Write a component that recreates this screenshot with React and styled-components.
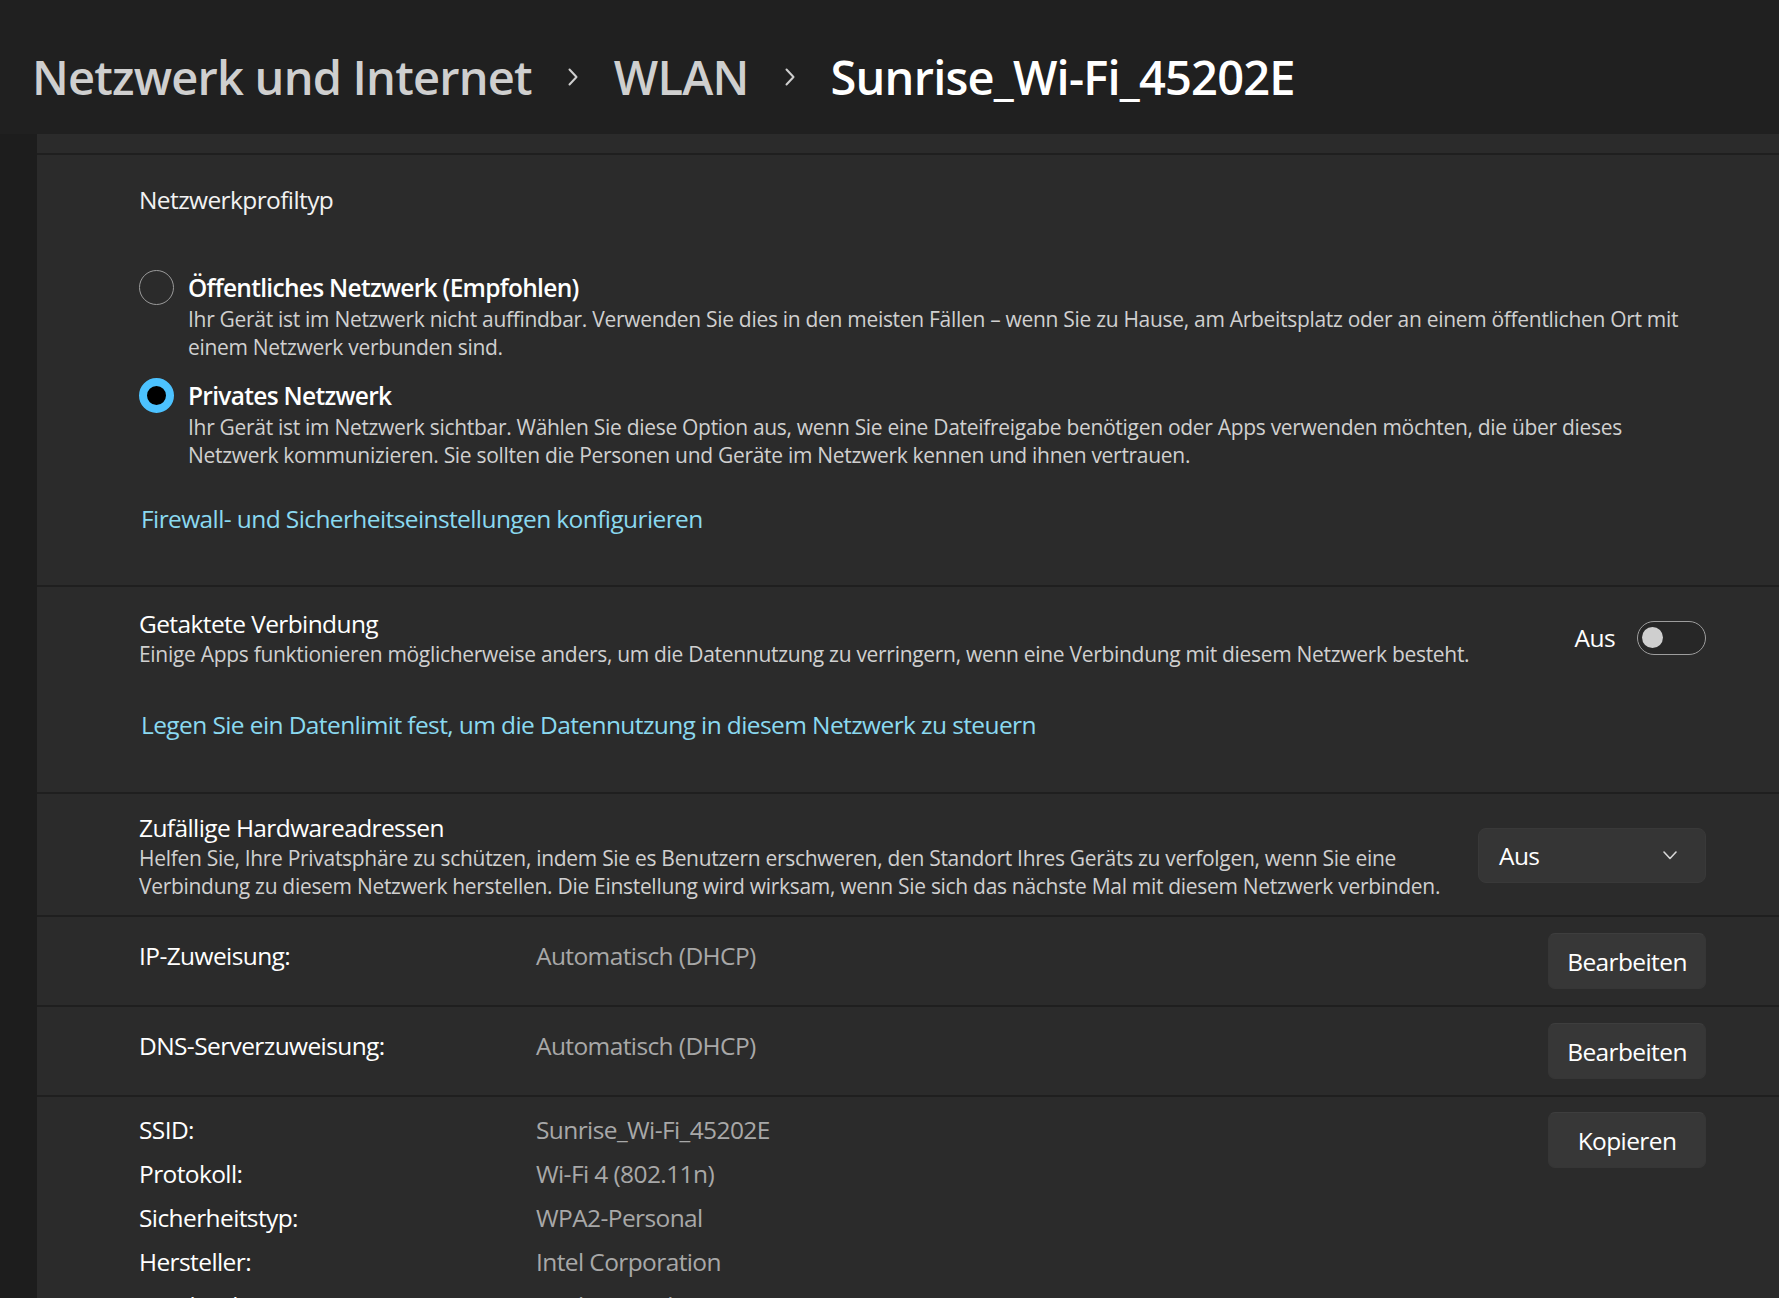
import styled, { createGlobalStyle } from "styled-components";

const FONT = `"Segoe UI", "Open Sans", "Noto Sans", sans-serif`;

const GlobalStyle = createGlobalStyle`
  html, body {
    margin: 0;
    padding: 0;
  }
  body {
    background: #202020;
    font-family: ${FONT};
    color: #ffffff;
    overflow: hidden;
  }
`;

const Page = styled.div`
  width: 1779px;
  height: 1298px;
  display: flex;
  flex-direction: column;
  overflow: hidden;
`;

const Header = styled.header`
  height: 134px;
  flex-shrink: 0;
  box-sizing: border-box;
  padding: 20px 0 0 32px;
  display: flex;
  align-items: center;
  gap: 36px;
`;

const Crumb = styled.span`
  font-size: 47px;
  line-height: 1;
  font-weight: 600;
  letter-spacing: -0.8px;
  white-space: nowrap;
  color: ${(p) => (p.$current ? "#ffffff" : "#cfcfcf")};
`;

const Body = styled.div`
  flex: 1;
  display: flex;
  padding-left: 37px;
  background: #1d1d1d;
  min-height: 0;
  overflow: hidden;
`;

const Panel = styled.main`
  flex: 1;
  min-width: 0;
  min-height: 0;
  display: flex;
  flex-direction: column;
  gap: 2px;
  background: #1f1f1f;
`;

const Card = styled.section`
  background: #2b2b2b;
  flex-shrink: 0;
  padding: ${(p) => p.$pad || "0 73px 0 102px"};
  font-size: 24.5px;
  letter-spacing: -0.6px;
`;

const StubCard = styled(Card)`
  height: 19px;
  padding: 0;
`;

const SectionLabel = styled.div`
  line-height: 35px;
  color: #f2f2f2;
`;

const RadioGroup = styled.div`
  margin-top: 53px;
  display: flex;
  flex-direction: column;
  gap: 17px;
`;

const RadioOption = styled.label`
  display: grid;
  grid-template-columns: 35px 1fr;
  column-gap: 14px;
`;

const RadioDot = styled.span`
  width: 35px;
  height: 35px;
  box-sizing: border-box;
  border-radius: 50%;
  background: ${(p) => (p.$checked ? "#000000" : "transparent")};
  border: ${(p) => (p.$checked ? "8.5px solid #4cc2ff" : "1.5px solid #9a9a9a")};
`;

const OptionTitle = styled.div`
  line-height: 35px;
  font-weight: 600;
  letter-spacing: -0.7px;
`;

const Desc = styled.div`
  grid-column: 2;
  font-size: 21px;
  line-height: 28px;
  letter-spacing: -0.3px;
  color: #d0d0d0;
  white-space: nowrap;
`;

const Link = styled.a`
  display: block;
  width: max-content;
  margin-top: ${(p) => p.$top || "32px"};
  margin-left: 2px;
  line-height: 35px;
  color: #8ad9f0;
  text-decoration: none;
  cursor: pointer;
`;

const SettingRow = styled.div`
  display: flex;
  align-items: center;
  justify-content: space-between;
  gap: 40px;
`;

const TextBlock = styled.div`
  display: flex;
  flex-direction: column;
  min-width: 0;
`;

const SettingTitle = styled.div`
  line-height: 33px;
`;

const SettingDesc = styled(Desc)`
  grid-column: auto;
`;

const ToggleWrap = styled.div`
  display: flex;
  align-items: center;
  gap: 22px;
  flex-shrink: 0;
`;

const Toggle = styled.button`
  width: 69px;
  height: 34px;
  box-sizing: border-box;
  border-radius: 17px;
  border: 1.5px solid #9d9d9d;
  background: #272727;
  padding: 0 0 0 4px;
  display: flex;
  align-items: center;
`;

const Knob = styled.span`
  width: 21px;
  height: 21px;
  border-radius: 50%;
  background: #cfcfcf;
`;

const Dropdown = styled.button`
  width: 228px;
  height: 55px;
  flex-shrink: 0;
  box-sizing: border-box;
  border-radius: 8px;
  border: 1px solid #393939;
  background: #353535;
  color: #ffffff;
  font-family: ${FONT};
  font-size: 24.5px;
  letter-spacing: -0.6px;
  padding: 0 28px 0 20px;
  display: flex;
  align-items: center;
  justify-content: space-between;
`;

const InfoCard = styled(Card)`
  height: 88px;
  box-sizing: border-box;
  display: flex;
  align-items: center;
`;

const InfoLabel = styled.span`
  width: 397px;
  flex-shrink: 0;
  margin-bottom: 12px;
`;

const InfoValue = styled.span`
  flex: 1;
  color: #a8a8a8;
  margin-bottom: 12px;
`;

const Button = styled.button`
  width: 158px;
  height: 56px;
  flex-shrink: 0;
  box-sizing: border-box;
  border-radius: 7px;
  border: 1px solid #363636;
  border-top-color: #3e3e3e;
  background: #373737;
  color: #ffffff;
  font-family: ${FONT};
  font-size: 24.5px;
  letter-spacing: -0.6px;
  margin-top: ${(p) => p.$top || "0"};
`;

const PropsCard = styled(Card)`
  display: flex;
  align-items: flex-start;
  flex: 1;
`;

const PropGrid = styled.dl`
  flex: 1;
  margin: 0;
  display: grid;
  grid-template-columns: 397px auto;
  line-height: 44px;
`;

const PropKey = styled.dt`
  margin: 0;
`;

const PropValue = styled.dd`
  margin: 0;
  color: #a8a8a8;
`;

const Chevron = () => (
  <svg width="10" height="18" viewBox="0 0 10 18" fill="none">
    <path d="M1.5 1.5 L8.5 9 L1.5 16.5" stroke="#cfcfcf" strokeWidth="2" strokeLinecap="round" strokeLinejoin="round" />
  </svg>
);

const ChevronDown = () => (
  <svg width="14" height="9" viewBox="0 0 14 9" fill="none">
    <path d="M1 1 L7 7.5 L13 1" stroke="#d6d6d6" strokeWidth="1.6" strokeLinecap="round" strokeLinejoin="round" />
  </svg>
);

const properties = [
  ["SSID:", "Sunrise_Wi-Fi_45202E"],
  ["Protokoll:", "Wi-Fi 4 (802.11n)"],
  ["Sicherheitstyp:", "WPA2-Personal"],
  ["Hersteller:", "Intel Corporation"],
  ["Beschreibung:", "Intel(R) Wireless-AC 9560 160MHz"],
  ["Treiberversion:", "22.150.0.3"],
];

export default function App() {
  return (
    <Page>
      <GlobalStyle />
      <Header>
        <Crumb>Netzwerk und Internet</Crumb>
        <Chevron />
        <Crumb>WLAN</Crumb>
        <Chevron />
        <Crumb $current>Sunrise_Wi-Fi_45202E</Crumb>
      </Header>

      <Body>
        <Panel>
          <StubCard />

          <Card $pad="27px 73px 49px 102px">
            <SectionLabel>Netzwerkprofiltyp</SectionLabel>
            <RadioGroup>
              <RadioOption>
                <RadioDot />
                <OptionTitle>Öffentliches Netzwerk (Empfohlen)</OptionTitle>
                <Desc>
                  Ihr Gerät ist im Netzwerk nicht auffindbar. Verwenden Sie dies in den meisten Fällen – wenn Sie zu Hause, am Arbeitsplatz oder an einem öffentlichen Ort mit
                  <br />
                  einem Netzwerk verbunden sind.
                </Desc>
              </RadioOption>
              <RadioOption>
                <RadioDot $checked />
                <OptionTitle>Privates Netzwerk</OptionTitle>
                <Desc>
                  Ihr Gerät ist im Netzwerk sichtbar. Wählen Sie diese Option aus, wenn Sie eine Dateifreigabe benötigen oder Apps verwenden möchten, die über dieses
                  <br />
                  Netzwerk kommunizieren. Sie sollten die Personen und Geräte im Netzwerk kennen und ihnen vertrauen.
                </Desc>
              </RadioOption>
            </RadioGroup>
            <Link>Firewall- und Sicherheitseinstellungen konfigurieren</Link>
          </Card>

          <Card $pad="20px 73px 50px 102px">
            <SettingRow>
              <TextBlock>
                <SettingTitle>Getaktete Verbindung</SettingTitle>
                <SettingDesc>
                  Einige Apps funktionieren möglicherweise anders, um die Datennutzung zu verringern, wenn eine Verbindung mit diesem Netzwerk besteht.
                </SettingDesc>
              </TextBlock>
              <ToggleWrap>
                Aus
                <Toggle>
                  <Knob />
                </Toggle>
              </ToggleWrap>
            </SettingRow>
            <Link $top="39px">Legen Sie ein Datenlimit fest, um die Datennutzung in diesem Netzwerk zu steuern</Link>
          </Card>

          <Card $pad="17px 73px 15px 102px">
            <SettingRow>
              <TextBlock>
                <SettingTitle>Zufällige Hardwareadressen</SettingTitle>
                <SettingDesc>
                  Helfen Sie, Ihre Privatsphäre zu schützen, indem Sie es Benutzern erschweren, den Standort Ihres Geräts zu verfolgen, wenn Sie eine
                  <br />
                  Verbindung zu diesem Netzwerk herstellen. Die Einstellung wird wirksam, wenn Sie sich das nächste Mal mit diesem Netzwerk verbinden.
                </SettingDesc>
              </TextBlock>
              <Dropdown>
                Aus
                <ChevronDown />
              </Dropdown>
            </SettingRow>
          </Card>

          <InfoCard>
            <InfoLabel>IP-Zuweisung:</InfoLabel>
            <InfoValue>Automatisch (DHCP)</InfoValue>
            <Button>Bearbeiten</Button>
          </InfoCard>

          <InfoCard>
            <InfoLabel>DNS-Serverzuweisung:</InfoLabel>
            <InfoValue>Automatisch (DHCP)</InfoValue>
            <Button>Bearbeiten</Button>
          </InfoCard>

          <PropsCard $pad="11px 73px 0 102px">
            <PropGrid>
              {properties.map(([key, value]) => (
                <>
                  <PropKey key={key}>{key}</PropKey>
                  <PropValue key={key + "-v"}>{value}</PropValue>
                </>
              ))}
            </PropGrid>
            <Button $top="4px">Kopieren</Button>
          </PropsCard>
        </Panel>
      </Body>
    </Page>
  );
}
